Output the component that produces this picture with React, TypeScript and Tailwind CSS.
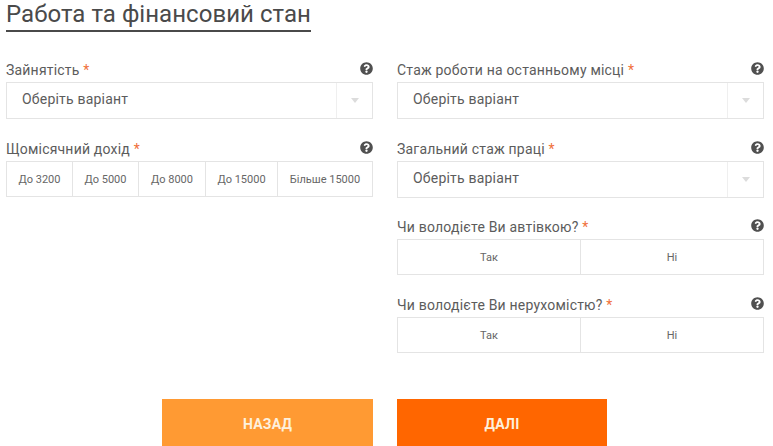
import React from 'react';
import { FaQuestionCircle } from 'react-icons/fa';

function Label({ text }: { text: string }) {
  return (
    <div className="flex h-[17px] items-center justify-between">
      <span className="mt-[2px] text-[14px] leading-[17px] tracking-[0.2px] text-[#5c5c5c]">
        {text} <span className="text-[#f0703a]">*</span>
      </span>
      <FaQuestionCircle className="mb-[2px] h-[13px] w-[13px] text-[#505050]" />
    </div>
  );
}

function SelectField({ label }: { label: string }) {
  return (
    <div>
      <Label text={label} />
      <div className="mt-[4px] flex h-[37px] border border-[#e4e4e4] bg-white">
        <div className="flex flex-1 items-center pb-[2px] pl-[15px] text-[14px] tracking-[0.2px] text-[#5c5c5c]">
          Оберіть варіант
        </div>
        <div className="flex w-[36px] items-center justify-center border-l border-[#efefef]">
          <div className="h-0 w-0 border-x-[4px] border-t-[5px] border-x-transparent border-t-[#dcdcdc]" />
        </div>
      </div>
    </div>
  );
}

function Segments({
  label,
  options,
  className,
}: {
  label: string;
  options: { text: string; className: string }[];
  className?: string;
}) {
  return (
    <div className={className}>
      <Label text={label} />
      <div className="mt-[4px] flex h-[36px] border border-[#e4e4e4] bg-white">
        {options.map((o, i) => (
          <div
            key={o.text}
            className={`flex items-center justify-center pt-[2px] text-[11px] text-[#666] ${o.className} ${i > 0 ? 'border-l border-[#e4e4e4]' : ''}`}
          >
            {o.text}
          </div>
        ))}
      </div>
    </div>
  );
}

const income = [
  { text: 'До 3200', className: 'w-[65px]' },
  { text: 'До 5000', className: 'w-[66px]' },
  { text: 'До 8000', className: 'w-[67px]' },
  { text: 'До 15000', className: 'w-[72px]' },
  { text: 'Більше 15000', className: 'flex-1' },
];

const yesNo = [
  { text: 'Так', className: 'w-[182px]' },
  { text: 'Ні', className: 'flex-1' },
];

export default function App() {
  return (
    <div className="h-[446px] w-[773px] overflow-hidden bg-white pl-[6px] pr-[9px] font-['Roboto',sans-serif]">
      <div className="inline-block border-b-2 border-[#4a4a4a] pb-[1px] text-[24px] leading-[29px] tracking-[0.04px] text-[#4a4a4a]">
        Работа та фінансовий стан
      </div>

      <div className="mt-[29px] grid grid-cols-2 gap-x-[24px]">
        <div className="flex flex-col gap-[21px]">
          <SelectField label="Зайнятість" />
          <Segments label="Щомісячний дохід" options={income} />
        </div>
        <div className="flex flex-col gap-[21px]">
          <SelectField label="Стаж роботи на останньому місці" />
          <SelectField label="Загальний стаж праці" />
          <Segments className="-mt-px" label="Чи володієте Ви автівкою?" options={yesNo} />
          <Segments label="Чи володієте Ви нерухомістю?" options={yesNo} />
        </div>
      </div>

      <div className="mt-[46px] flex justify-center gap-[24px] pr-[1px]">
        <button className="h-[50px] w-[211px] bg-[#ff9a33] text-[14px] font-bold tracking-[0.2px] text-[#fdf0dc]">НАЗАД</button>
        <button className="h-[50px] w-[210px] bg-[#ff6600] text-[14px] font-bold tracking-[0.2px] text-[#fdf0dc]">ДАЛІ</button>
      </div>
    </div>
  );
}
